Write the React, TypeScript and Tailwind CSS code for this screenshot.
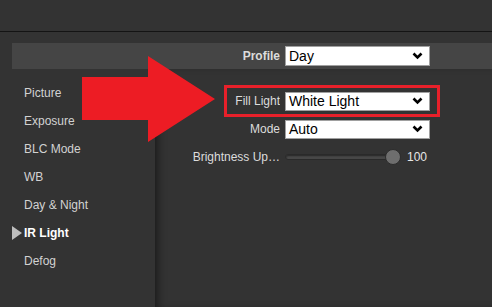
import React from "react";

const font = { fontFamily: '"Liberation Sans", Arial, sans-serif' };

function Chevron() {
  return (
    <svg width="11" height="8" viewBox="0 0 11 8" className="absolute right-[6px] top-1/2 -translate-y-1/2">
      <polyline points="1.5,1.5 5.5,5.5 9.5,1.5" fill="none" stroke="#000" strokeWidth="2.6" />
    </svg>
  );
}

function Select({ value, h = "h-[19px]" }: { value: string; h?: string }) {
  return (
    <div className={`relative w-[145px] ${h} bg-white border border-[#a0a0a0] flex items-center pl-[3px] text-[14px] text-black leading-none`}>
      <span>{value}</span>
      <Chevron />
    </div>
  );
}

const items = ["Picture", "Exposure", "BLC Mode", "WB", "Day & Night", "IR Light", "Defog"];

export default function App() {
  return (
    <div className="relative w-[492px] h-[307px] bg-[#333333] overflow-hidden" style={font}>
      <div className="h-[31px]" />
      <div className="h-px bg-[#141414]" />
      <div className="h-[11px]" />
      <div className="pl-[12px] flex flex-col h-[264px]">
        <div className="h-[26px] bg-[#454545] flex items-center">
          <div className="w-[179px]" />
          <div className="w-[89px] text-right text-[12px] font-bold text-[#dcdcdc]">Profile</div>
          <div className="w-[5px]" />
          <Select value="Day" h="h-[20px]" />
        </div>
        <div className="flex flex-1">
          <div className="w-[143px] pt-[10px] flex flex-col">
            {items.map((it) =>
              it === "IR Light" ? (
                <div key={it} className="h-[28px] flex items-center relative">
                  <svg width="10" height="14" viewBox="0 0 10 14" className="absolute left-0 top-[7px]">
                    <polygon points="0,0 10,7 0,14" fill="#bdbdbd" />
                  </svg>
                  <span className="pl-[12px] text-[12px] font-bold text-white">{it}</span>
                </div>
              ) : (
                <div key={it} className="h-[28px] flex items-center pl-[12px] text-[12px] text-[#d2d2d2]">
                  {it}
                </div>
              )
            )}
          </div>
          <div className="flex-1 pt-[18px] pl-[36px] shadow-[inset_7px_0_10px_-5px_rgba(0,0,0,0.55)]">
            {[
              ["Fill Light", "White Light"],
              ["Mode", "Auto"],
            ].map(([l, v]) => (
              <div key={l} className="h-[28px] flex items-center">
                <div className="w-[89px] text-right text-[12px] text-[#dcdcdc] truncate">{l}</div>
                <div className="w-[5px]" />
                <Select value={v} />
              </div>
            ))}
            <div className="h-[28px] flex items-center">
              <div className="w-[91px] -ml-[2px] text-right text-[12px] text-[#dcdcdc] whitespace-nowrap overflow-hidden">Brightness Up…</div>
              <div className="w-[5px]" />
              <div className="relative w-[116px] h-[16px] flex items-center">
                <div className="w-full h-[6px] rounded-full bg-[#4a4a4a] border border-[#2a2a2a] shadow-[inset_0_1px_2px_rgba(0,0,0,0.5)]" />
                <div className="absolute right-0 top-0 w-[16px] h-[16px] rounded-full bg-[#6e6e6e] border border-[#2c2c2c]" />
              </div>
              <div className="ml-[6px] text-[12px] text-[#e6e6e6]">100</div>
            </div>
          </div>
        </div>
      </div>
      {/* annotation overlay */}
      <div className="absolute left-[224px] top-[85px] w-[216px] h-[32px] border-[3px] border-[#e8202a] pointer-events-none" />
      <svg className="absolute left-0 top-0 pointer-events-none" width="492" height="307">
        <polygon points="82,77 148,77 148,56 215,99 148,142 148,120 82,120" fill="#ed1c24" />
      </svg>
    </div>
  );
}
